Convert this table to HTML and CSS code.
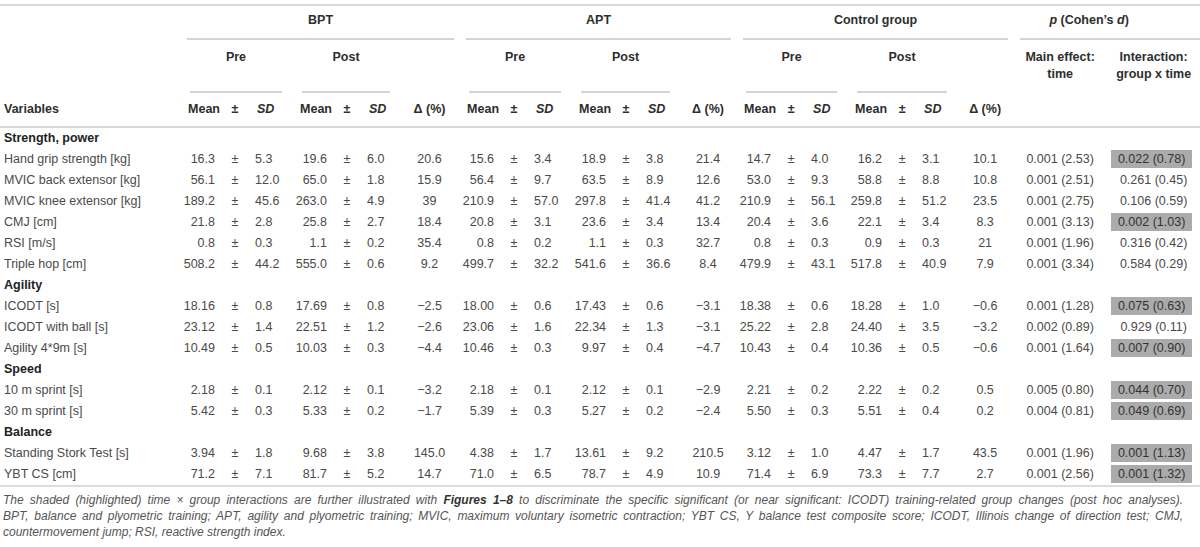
FILE: index.html
```html
<!DOCTYPE html>
<html lang="en">
<head>
<meta charset="utf-8">
<title>Table</title>
<link rel="stylesheet" href="styles.css">
</head>
<body>
<div class="wrap">
<table class="data">
<colgroup>
<col style="width:180px">
<col style="width:42px"><col style="width:26px"><col style="width:44px">
<col style="width:42px"><col style="width:26px"><col style="width:40px">
<col style="width:59px">
<col style="width:42px"><col style="width:26px"><col style="width:44px">
<col style="width:42px"><col style="width:26px"><col style="width:41px">
<col style="width:56px">
<col style="width:42px"><col style="width:26px"><col style="width:43px">
<col style="width:42px"><col style="width:26px"><col style="width:42px">
<col style="width:56px">
<col style="width:94px"><col style="width:93px">
</colgroup>
<thead>
<tr class="r1">
<th></th>
<th colspan="7"><div class="grp">BPT</div></th>
<th colspan="7"><div class="grp">APT</div></th>
<th colspan="7"><div class="grp">Control group</div></th>
<th colspan="2"><div class="grp grp-last"><i>p</i> (Cohen’s <i>d</i>)</div></th>
</tr>
<tr class="r2">
<th></th>
<th colspan="3"><div class="sub">Pre</div></th>
<th colspan="3"><div class="sub">Post</div></th>
<th></th>
<th colspan="3"><div class="sub">Pre</div></th>
<th colspan="3"><div class="sub">Post</div></th>
<th></th>
<th colspan="3"><div class="sub">Pre</div></th>
<th colspan="3"><div class="sub">Post</div></th>
<th></th>
<th class="two">Main effect:<br>time</th>
<th class="two">Interaction:<br>group x time</th>
</tr>
<tr class="r3">
<th class="var">Variables</th>
<th class="hm">Mean</th><th>±</th><th class="hs"><i>SD</i></th>
<th class="hm">Mean</th><th>±</th><th class="hs"><i>SD</i></th>
<th>Δ (%)</th>
<th class="hm">Mean</th><th>±</th><th class="hs"><i>SD</i></th>
<th class="hm">Mean</th><th>±</th><th class="hs"><i>SD</i></th>
<th>Δ (%)</th>
<th class="hm">Mean</th><th>±</th><th class="hs"><i>SD</i></th>
<th class="hm">Mean</th><th>±</th><th class="hs"><i>SD</i></th>
<th>Δ (%)</th>
<th></th><th></th>
</tr>
</thead>
<tbody>
<tr class="sec"><td colspan="24">Strength, power</td></tr>
<tr><td class="v">Hand grip strength [kg]</td><td class="m">16.3</td><td class="pm">±</td><td class="s">5.3</td><td class="m">19.6</td><td class="pm">±</td><td class="s">6.0</td><td class="d">20.6</td><td class="m">15.6</td><td class="pm">±</td><td class="s">3.4</td><td class="m">18.9</td><td class="pm">±</td><td class="s">3.8</td><td class="d">21.4</td><td class="m">14.7</td><td class="pm">±</td><td class="s">4.0</td><td class="m">16.2</td><td class="pm">±</td><td class="s">3.1</td><td class="d">10.1</td><td class="p">0.001 (2.53)</td><td class="p hl"><span>0.022 (0.78)</span></td></tr>
<tr><td class="v">MVIC back extensor [kg]</td><td class="m">56.1</td><td class="pm">±</td><td class="s">12.0</td><td class="m">65.0</td><td class="pm">±</td><td class="s">1.8</td><td class="d">15.9</td><td class="m">56.4</td><td class="pm">±</td><td class="s">9.7</td><td class="m">63.5</td><td class="pm">±</td><td class="s">8.9</td><td class="d">12.6</td><td class="m">53.0</td><td class="pm">±</td><td class="s">9.3</td><td class="m">58.8</td><td class="pm">±</td><td class="s">8.8</td><td class="d">10.8</td><td class="p">0.001 (2.51)</td><td class="p">0.261 (0.45)</td></tr>
<tr><td class="v">MVIC knee extensor [kg]</td><td class="m">189.2</td><td class="pm">±</td><td class="s">45.6</td><td class="m">263.0</td><td class="pm">±</td><td class="s">4.9</td><td class="d">39</td><td class="m">210.9</td><td class="pm">±</td><td class="s">57.0</td><td class="m">297.8</td><td class="pm">±</td><td class="s">41.4</td><td class="d">41.2</td><td class="m">210.9</td><td class="pm">±</td><td class="s">56.1</td><td class="m">259.8</td><td class="pm">±</td><td class="s">51.2</td><td class="d">23.5</td><td class="p">0.001 (2.75)</td><td class="p">0.106 (0.59)</td></tr>
<tr><td class="v">CMJ [cm]</td><td class="m">21.8</td><td class="pm">±</td><td class="s">2.8</td><td class="m">25.8</td><td class="pm">±</td><td class="s">2.7</td><td class="d">18.4</td><td class="m">20.8</td><td class="pm">±</td><td class="s">3.1</td><td class="m">23.6</td><td class="pm">±</td><td class="s">3.4</td><td class="d">13.4</td><td class="m">20.4</td><td class="pm">±</td><td class="s">3.6</td><td class="m">22.1</td><td class="pm">±</td><td class="s">3.4</td><td class="d">8.3</td><td class="p">0.001 (3.13)</td><td class="p hl"><span>0.002 (1.03)</span></td></tr>
<tr><td class="v">RSI [m/s]</td><td class="m">0.8</td><td class="pm">±</td><td class="s">0.3</td><td class="m">1.1</td><td class="pm">±</td><td class="s">0.2</td><td class="d">35.4</td><td class="m">0.8</td><td class="pm">±</td><td class="s">0.2</td><td class="m">1.1</td><td class="pm">±</td><td class="s">0.3</td><td class="d">32.7</td><td class="m">0.8</td><td class="pm">±</td><td class="s">0.3</td><td class="m">0.9</td><td class="pm">±</td><td class="s">0.3</td><td class="d">21</td><td class="p">0.001 (1.96)</td><td class="p">0.316 (0.42)</td></tr>
<tr><td class="v">Triple hop [cm]</td><td class="m">508.2</td><td class="pm">±</td><td class="s">44.2</td><td class="m">555.0</td><td class="pm">±</td><td class="s">0.6</td><td class="d">9.2</td><td class="m">499.7</td><td class="pm">±</td><td class="s">32.2</td><td class="m">541.6</td><td class="pm">±</td><td class="s">36.6</td><td class="d">8.4</td><td class="m">479.9</td><td class="pm">±</td><td class="s">43.1</td><td class="m">517.8</td><td class="pm">±</td><td class="s">40.9</td><td class="d">7.9</td><td class="p">0.001 (3.34)</td><td class="p">0.584 (0.29)</td></tr>
<tr class="sec"><td colspan="24">Agility</td></tr>
<tr><td class="v">ICODT [s]</td><td class="m">18.16</td><td class="pm">±</td><td class="s">0.8</td><td class="m">17.69</td><td class="pm">±</td><td class="s">0.8</td><td class="d">−2.5</td><td class="m">18.00</td><td class="pm">±</td><td class="s">0.6</td><td class="m">17.43</td><td class="pm">±</td><td class="s">0.6</td><td class="d">−3.1</td><td class="m">18.38</td><td class="pm">±</td><td class="s">0.6</td><td class="m">18.28</td><td class="pm">±</td><td class="s">1.0</td><td class="d">−0.6</td><td class="p">0.001 (1.28)</td><td class="p hl"><span>0.075 (0.63)</span></td></tr>
<tr><td class="v">ICODT with ball [s]</td><td class="m">23.12</td><td class="pm">±</td><td class="s">1.4</td><td class="m">22.51</td><td class="pm">±</td><td class="s">1.2</td><td class="d">−2.6</td><td class="m">23.06</td><td class="pm">±</td><td class="s">1.6</td><td class="m">22.34</td><td class="pm">±</td><td class="s">1.3</td><td class="d">−3.1</td><td class="m">25.22</td><td class="pm">±</td><td class="s">2.8</td><td class="m">24.40</td><td class="pm">±</td><td class="s">3.5</td><td class="d">−3.2</td><td class="p">0.002 (0.89)</td><td class="p">0.929 (0.11)</td></tr>
<tr><td class="v">Agility 4*9m [s]</td><td class="m">10.49</td><td class="pm">±</td><td class="s">0.5</td><td class="m">10.03</td><td class="pm">±</td><td class="s">0.3</td><td class="d">−4.4</td><td class="m">10.46</td><td class="pm">±</td><td class="s">0.3</td><td class="m">9.97</td><td class="pm">±</td><td class="s">0.4</td><td class="d">−4.7</td><td class="m">10.43</td><td class="pm">±</td><td class="s">0.4</td><td class="m">10.36</td><td class="pm">±</td><td class="s">0.5</td><td class="d">−0.6</td><td class="p">0.001 (1.64)</td><td class="p hl"><span>0.007 (0.90)</span></td></tr>
<tr class="sec"><td colspan="24">Speed</td></tr>
<tr><td class="v">10 m sprint [s]</td><td class="m">2.18</td><td class="pm">±</td><td class="s">0.1</td><td class="m">2.12</td><td class="pm">±</td><td class="s">0.1</td><td class="d">−3.2</td><td class="m">2.18</td><td class="pm">±</td><td class="s">0.1</td><td class="m">2.12</td><td class="pm">±</td><td class="s">0.1</td><td class="d">−2.9</td><td class="m">2.21</td><td class="pm">±</td><td class="s">0.2</td><td class="m">2.22</td><td class="pm">±</td><td class="s">0.2</td><td class="d">0.5</td><td class="p">0.005 (0.80)</td><td class="p hl"><span>0.044 (0.70)</span></td></tr>
<tr><td class="v">30 m sprint [s]</td><td class="m">5.42</td><td class="pm">±</td><td class="s">0.3</td><td class="m">5.33</td><td class="pm">±</td><td class="s">0.2</td><td class="d">−1.7</td><td class="m">5.39</td><td class="pm">±</td><td class="s">0.3</td><td class="m">5.27</td><td class="pm">±</td><td class="s">0.2</td><td class="d">−2.4</td><td class="m">5.50</td><td class="pm">±</td><td class="s">0.3</td><td class="m">5.51</td><td class="pm">±</td><td class="s">0.4</td><td class="d">0.2</td><td class="p">0.004 (0.81)</td><td class="p hl"><span>0.049 (0.69)</span></td></tr>
<tr class="sec"><td colspan="24">Balance</td></tr>
<tr><td class="v">Standing Stork Test [s]</td><td class="m">3.94</td><td class="pm">±</td><td class="s">1.8</td><td class="m">9.68</td><td class="pm">±</td><td class="s">3.8</td><td class="d">145.0</td><td class="m">4.38</td><td class="pm">±</td><td class="s">1.7</td><td class="m">13.61</td><td class="pm">±</td><td class="s">9.2</td><td class="d">210.5</td><td class="m">3.12</td><td class="pm">±</td><td class="s">1.0</td><td class="m">4.47</td><td class="pm">±</td><td class="s">1.7</td><td class="d">43.5</td><td class="p">0.001 (1.96)</td><td class="p hl"><span>0.001 (1.13)</span></td></tr>
<tr class="last"><td class="v">YBT CS [cm]</td><td class="m">71.2</td><td class="pm">±</td><td class="s">7.1</td><td class="m">81.7</td><td class="pm">±</td><td class="s">5.2</td><td class="d">14.7</td><td class="m">71.0</td><td class="pm">±</td><td class="s">6.5</td><td class="m">78.7</td><td class="pm">±</td><td class="s">4.9</td><td class="d">10.9</td><td class="m">71.4</td><td class="pm">±</td><td class="s">6.9</td><td class="m">73.3</td><td class="pm">±</td><td class="s">7.7</td><td class="d">2.7</td><td class="p">0.001 (2.56)</td><td class="p hl"><span>0.001 (1.32)</span></td></tr>
</tbody>
</table>
<div class="note">
<span class="ln">The shaded (highlighted) time × group interactions are further illustrated with <b>Figures 1–8</b> to discriminate the specific significant (or near significant: ICODT) training-related group changes (post hoc analyses).</span>
<span class="ln">BPT, balance and plyometric training; APT, agility and plyometric training; MVIC, maximum voluntary isometric contraction; YBT CS, Y balance test composite score; ICODT, Illinois change of direction test; CMJ,</span>
<span class="ln ln-last">countermovement jump; RSI, reactive strength index.</span>
</div>
</div>
</body>
</html>
```

FILE: styles.css
```css
html, body {
  margin: 0;
  padding: 0;
  background: #ffffff;
}

body {
  font-family: "Liberation Sans", Arial, Helvetica, sans-serif;
  font-size: 12.5px;
  color: #4a4a4a;
}

.wrap {
  padding-top: 4px;
  width: 1200px;
}

.data {
  width: 1200px;
  table-layout: fixed;
  border-collapse: separate;
  border-spacing: 0;
}

.data th {
  padding: 0;
  font-weight: bold;
  color: #2e2e2e;
  line-height: 17px;
  text-align: center;
  vertical-align: top;
  white-space: nowrap;
}

.data td {
  padding: 2px 0;
  line-height: 17px;
  white-space: nowrap;
}

/* header row 1 */
.r1 th {
  border-top: 2px solid #d9d9d9;
}

.grp {
  margin: 0 5px 0 7px;
  padding: 6px 0 9px;
  border-bottom: 2px solid #d4d4d4;
}

.grp-last {
  margin-right: 0;
  padding-right: 42px;
}

/* header row 2 */
.sub {
  margin: 0 10px;
  padding: 9px 0 25px;
  border-bottom: 2px solid #d4d4d4;
}

.r2 th.two {
  padding-top: 9px;
}

/* header row 3 */
.r3 th {
  padding: 8px 0;
  border-bottom: 2px solid #dadada;
}

.r3 th.var {
  text-align: left;
  padding-left: 4px;
}

.r3 th.hm {
  text-align: right;
  padding-right: 2px;
}

.r3 th.hs {
  text-align: left;
  padding-left: 9px;
}

/* body */
.sec td {
  font-weight: bold;
  color: #222222;
  padding-left: 4px;
}

.data td.v {
  padding-left: 4px;
}

.data td.m {
  text-align: right;
  padding-right: 7px;
}

.data td.pm {
  text-align: center;
}

.data td.s {
  text-align: left;
  padding-left: 7px;
}

.data td.d,
.data td.p {
  text-align: center;
}

.data td.hl {
  padding: 1px 0 2px;
}

.hl span {
  display: block;
  margin: 0 8px 0 4px;
  line-height: 18px;
  background: #ababab;
  color: #333333;
}

.last td {
  border-bottom: 2px solid #dcdcdc;
}

/* footnote */
.note {
  padding: 5px 17px 0 3px;
  font-size: 12px;
  line-height: 16px;
  font-style: italic;
  color: #555555;
}

.ln {
  display: block;
  text-align: justify;
  text-align-last: justify;
  white-space: nowrap;
}

.ln-last {
  text-align-last: left;
}

.note b {
  font-weight: bold;
  color: #333333;
}
```
